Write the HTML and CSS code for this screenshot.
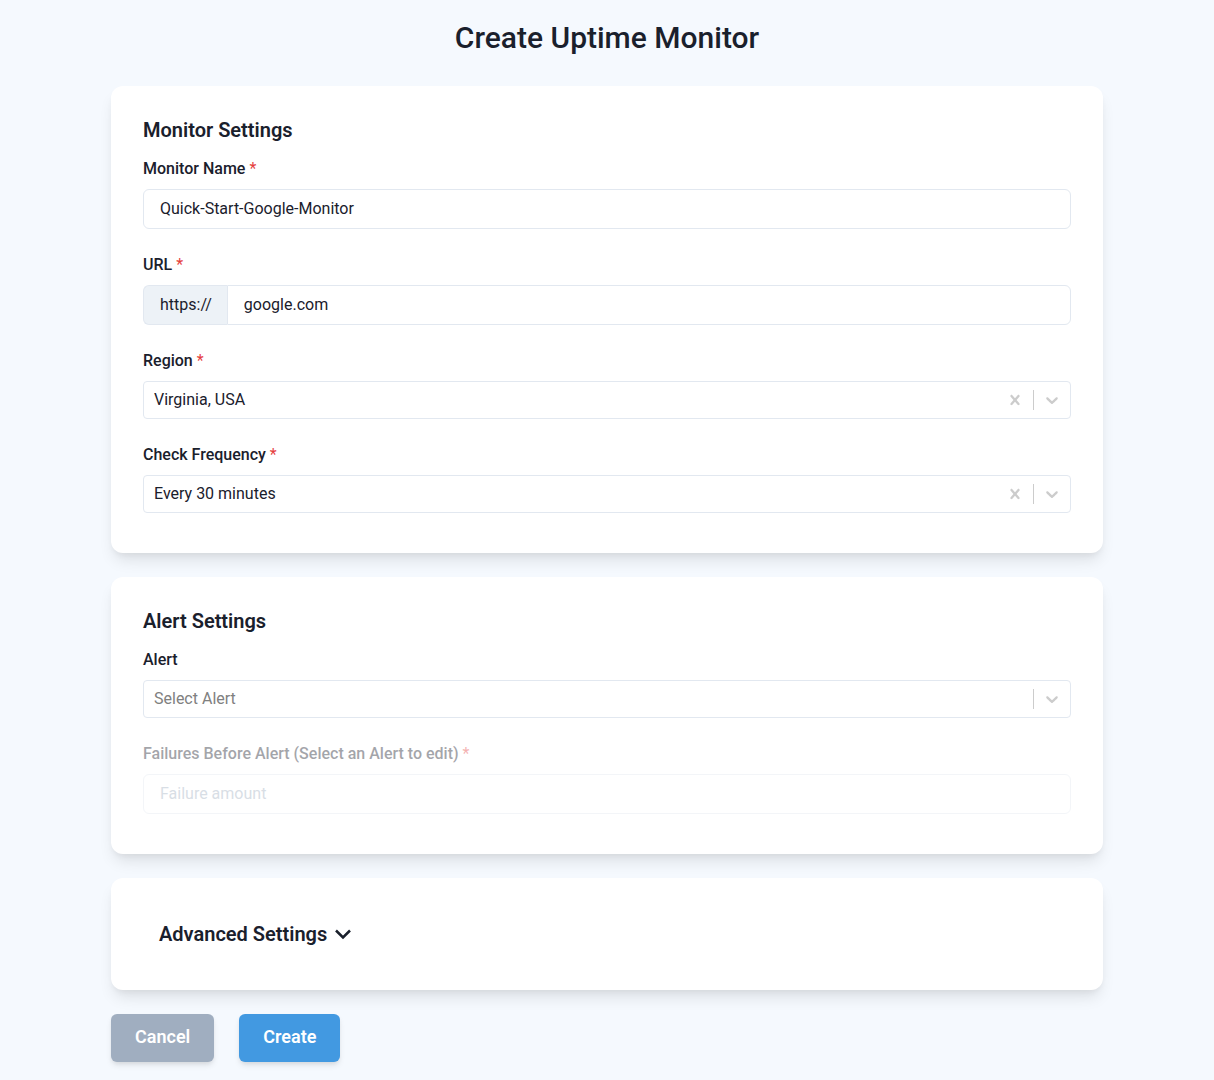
FILE: index.html
```html
<!DOCTYPE html>
<html lang="en">
<head>
<meta charset="utf-8">
<meta name="viewport" content="width=device-width, initial-scale=1">
<title>Create Uptime Monitor</title>
<link rel="stylesheet" href="styles.css">
</head>
<body>
<svg class="sprite" aria-hidden="true">
  <symbol id="clear" viewBox="0 0 20 20"><path d="M14.348 14.849c-0.469 0.469-1.229 0.469-1.697 0l-2.651-3.030-2.651 3.029c-0.469 0.469-1.229 0.469-1.697 0-0.469-0.469-0.469-1.229 0-1.697l2.758-3.15-2.759-3.152c-0.469-0.469-0.469-1.228 0-1.697s1.228-0.469 1.697 0l2.652 3.031 2.651-3.031c0.469-0.469 1.228-0.469 1.697 0s0.469 1.229 0 1.697l-2.758 3.152 2.758 3.15c0.469 0.469 0.469 1.229 0 1.698z"/></symbol>
  <symbol id="down" viewBox="0 0 20 20"><path d="M4.516 7.548c0.436-0.446 1.043-0.481 1.576 0l3.908 3.747 3.908-3.747c0.533-0.481 1.141-0.446 1.574 0 0.436 0.445 0.408 1.197 0 1.615-0.406 0.418-4.695 4.502-4.695 4.502-0.217 0.223-0.502 0.335-0.787 0.335s-0.57-0.112-0.789-0.335c0 0-4.287-4.084-4.695-4.502s-0.436-1.17 0-1.615z"/></symbol>
</svg>
<main class="page">
  <h1 class="title">Create Uptime Monitor</h1>
  <form class="form">
    <section class="card">
      <h2 class="heading">Monitor Settings</h2>
      <div class="field">
        <label class="label" for="name">Monitor Name <span class="required">*</span></label>
        <input class="input" id="name" type="text" value="Quick-Start-Google-Monitor">
      </div>
      <div class="field">
        <label class="label" for="url">URL <span class="required">*</span></label>
        <div class="group">
          <span class="addon">https://</span>
          <input class="input" id="url" type="text" value="google.com">
        </div>
      </div>
      <div class="field">
        <label class="label" for="region">Region <span class="required">*</span></label>
        <div class="picker">
          <select class="select" id="region"><option>Virginia, USA</option></select>
          <button class="clear" type="button" aria-label="Clear region"><svg class="icon"><use href="#clear"/></svg></button>
          <span class="divider"></span>
          <span class="arrow"><svg class="icon"><use href="#down"/></svg></span>
        </div>
      </div>
      <div class="field">
        <label class="label" for="frequency">Check Frequency <span class="required">*</span></label>
        <div class="picker">
          <select class="select" id="frequency"><option>Every 30 minutes</option></select>
          <button class="clear" type="button" aria-label="Clear check frequency"><svg class="icon"><use href="#clear"/></svg></button>
          <span class="divider"></span>
          <span class="arrow"><svg class="icon"><use href="#down"/></svg></span>
        </div>
      </div>
    </section>
    <section class="card">
      <h2 class="heading">Alert Settings</h2>
      <div class="field">
        <label class="label" for="alert">Alert</label>
        <div class="picker">
          <select class="select empty" id="alert"><option>Select Alert</option></select>
          <span class="divider"></span>
          <span class="arrow"><svg class="icon"><use href="#down"/></svg></span>
        </div>
      </div>
      <div class="field disabled">
        <label class="label" for="failures">Failures Before Alert (Select an Alert to edit) <span class="required">*</span></label>
        <input class="input" id="failures" type="text" placeholder="Failure amount" disabled>
      </div>
    </section>
    <section class="card advanced">
      <button class="toggle" type="button" aria-expanded="false">Advanced Settings
        <svg class="chevron" viewBox="0 0 16 16" aria-hidden="true"><path d="M1 4.5 8 11.5 15 4.5"/></svg>
      </button>
    </section>
    <div class="actions">
      <button class="button cancel" type="button">Cancel</button>
      <button class="button create" type="submit">Create</button>
    </div>
  </form>
</main>
</body>
</html>
```
FILE: styles.css
```css
*, *::before, *::after { box-sizing: border-box; }

body {
  margin: 0;
  background: #f5f9fe;
  color: #1a202c;
  font: 400 16px/24px Roboto, sans-serif;
}

button, input, select { margin: 0; font: inherit; color: inherit; }
button { border: 0; background: none; cursor: pointer; }

.sprite { position: absolute; width: 0; height: 0; }

.page { max-width: 1024px; margin: 0 auto; padding: 16px 16px 18px; }

.title { margin: 0 0 26px; font-size: 30px; line-height: 44px; font-weight: 500; text-align: center; }

.form { display: flex; flex-direction: column; gap: 24px; }

.card {
  padding: 32px 32px 40px;
  border-radius: 12px;
  background: #fff;
  box-shadow: 0 10px 15px -3px rgba(0, 0, 0, 0.1), 0 4px 6px -2px rgba(0, 0, 0, 0.05);
}

.heading { margin: 0 0 15px; font-size: 20px; line-height: 24px; font-weight: 600; }

.field + .field { margin-top: 24px; }
.label { display: block; margin-bottom: 8px; line-height: 24px; font-weight: 500; }
.required { color: #e53e3e; font-weight: 400; }

.input {
  display: block;
  width: 100%;
  height: 40px;
  padding: 0 16px 2px;
  border: 1px solid #e2e8f0;
  border-radius: 6px;
  background: #fff;
}

.group { display: flex; }
.group .input { flex: 1; min-width: 0; border-radius: 0 6px 6px 0; }
.addon {
  padding: 7px 15px 7px 16px;
  border: 1px solid #e2e8f0;
  border-right: 0;
  border-radius: 6px 0 0 6px;
  background: #edf2f7;
}

.picker {
  display: flex;
  align-items: center;
  height: 38px;
  border: 1px solid #e2e8f0;
  border-radius: 4px;
  color: #ccc;
}
.select {
  flex: 1;
  min-width: 0;
  height: 36px;
  padding: 0 10px;
  border: 0;
  background: none;
  color: #1a202c;
  appearance: none;
}
.empty { color: #808080; }
.clear, .arrow { display: flex; padding: 8px; color: inherit; }
.divider { width: 1px; height: 20px; background: #ccc; }
.icon { width: 20px; height: 20px; fill: currentColor; }

.disabled .label { opacity: 0.4; }
.disabled .input { opacity: 0.4; }
.disabled .input::placeholder { color: #a0aec0; }

.advanced { padding: 32px; }
.toggle {
  display: flex;
  align-items: center;
  gap: 8px;
  height: 48px;
  padding: 0 16px;
  font-size: 20px;
  font-weight: 600;
}
.chevron { width: 16px; height: 16px; fill: none; stroke: currentColor; stroke-width: 2.5; }

.actions { display: flex; gap: 25px; }
.button {
  height: 48px;
  padding: 0 24px 2px;
  border-radius: 6px;
  color: #fff;
  font-size: 18px;
  font-weight: 600;
  box-shadow: 0 4px 6px -1px rgba(0, 0, 0, 0.1), 0 2px 4px -1px rgba(0, 0, 0, 0.06);
}
.cancel { background: #a0aec0; }
.create { background: #4299e1; }
```
